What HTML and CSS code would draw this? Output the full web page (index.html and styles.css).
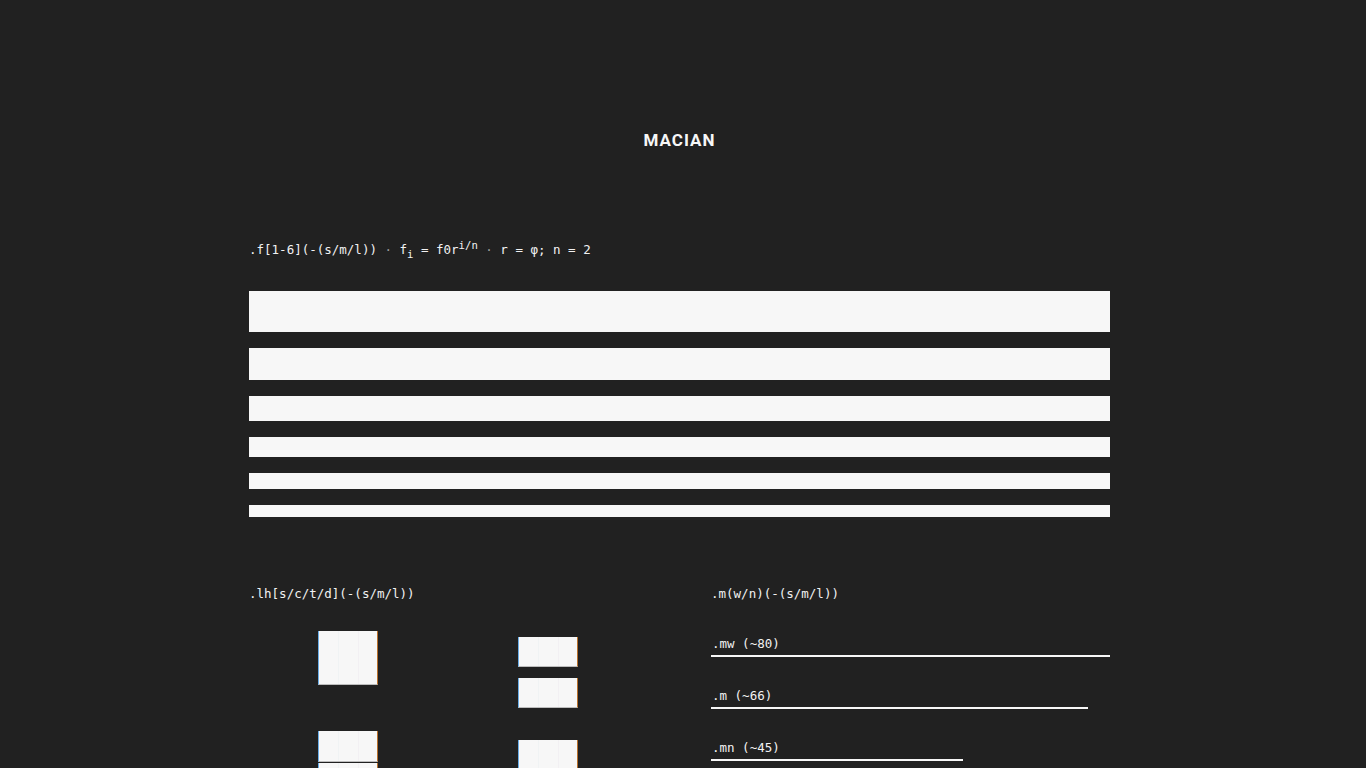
FILE: index.html
```html
<!DOCTYPE html>
<html lang="en">
<head>
<meta charset="utf-8">
<title>Macian</title>
<link rel="stylesheet" href="styles.css">
</head>
<body>
<main class="page">
  <header class="masthead">
    <h1 class="title">MACIAN</h1>
  </header>

  <section class="section">
    <p class="label">.f[1-6](-(s/m/l)) <span class="dim">·</span> f<sub>i</sub> = f0r<sup>i/n</sup> <span class="dim">·</span> r = φ; n = 2</p>
    <div class="bars">
      <div class="bar bar-1"></div>
      <div class="bar bar-2"></div>
      <div class="bar bar-3"></div>
      <div class="bar bar-4"></div>
      <div class="bar bar-5"></div>
      <div class="bar bar-6"></div>
    </div>
  </section>

  <section class="section split">
    <div class="col">
      <p class="label">.lh[s/c/t/d](-(s/m/l))</p>
      <div class="lh-grid">
        <div class="lh-col lh-col-a">
          <div class="lh-group lh-solid">
            <div class="blk blk-tall"></div>
          </div>
          <div class="lh-group lh-copy">
            <div class="blk blk-31"></div>
            <div class="blk blk-31"></div>
            <div class="blk blk-31"></div>
          </div>
        </div>
        <div class="lh-col lh-col-b">
          <div class="lh-group lh-title">
            <div class="blk blk-30"></div>
            <div class="blk blk-30"></div>
          </div>
          <div class="lh-group lh-double">
            <div class="blk blk-30"></div>
            <div class="blk blk-30"></div>
          </div>
        </div>
      </div>
    </div>
    <div class="col">
      <p class="label">.m(w/n)(-(s/m/l))</p>
      <ul class="measures">
        <li class="measure"><span class="m-name">.mw (~80)</span><span class="rule" style="width:399px"></span></li>
        <li class="measure"><span class="m-name">.m (~66)</span><span class="rule" style="width:377px"></span></li>
        <li class="measure"><span class="m-name">.mn (~45)</span><span class="rule" style="width:252px"></span></li>
      </ul>
    </div>
  </section>
</main>
</body>
</html>
```

FILE: styles.css
```css
html {
  background: #212121;
}
::-webkit-scrollbar {
  width: 8px;
  background: #1f1f1f;
}
::-webkit-scrollbar-thumb {
  background: #474747;
}
body {
  margin: 0;
  padding-right: 7px;
  background: #212121;
  color: #f7f7f7;
  font-family: "Roboto", "Liberation Sans", sans-serif;
}
.page {
  width: 861px;
  margin: 0 auto;
  padding: 128px 0 0;
  min-height: 5330px;
}
.masthead {
  display: flex;
  justify-content: center;
}
.title {
  margin: 0;
  font-size: 17px;
  line-height: 24px;
  font-weight: 700;
  letter-spacing: 1px;
  color: #f7f7f7;
}
.section {
  margin-top: 89px;
}
.section + .section {
  margin-top: 68px;
}
.label {
  margin: 0;
  font-family: "DejaVu Sans Mono", "Liberation Mono", monospace;
  font-size: 12.5px;
  line-height: 18px;
  color: #f2f2f2;
  white-space: pre;
}
.label sub, .label sup {
  font-size: 0.85em;
  line-height: 0;
}
.label .dim {
  color: #9a9a9a;
}
.bars {
  margin-top: 32px;
  display: flex;
  flex-direction: column;
  gap: 16px;
}
.bar {
  background: #f7f7f7;
}
.bar-1 { height: 41px; }
.bar-2 { height: 32px; }
.bar-3 { height: 25px; }
.bar-4 { height: 20px; }
.bar-5 { height: 16px; }
.bar-6 { height: 12px; }

.split {
  display: grid;
  grid-template-columns: 399px 399px;
  column-gap: 63px;
}
.lh-grid {
  display: grid;
  grid-template-columns: 1fr 1fr;
}
.lh-col {
  display: flex;
  flex-direction: column;
  align-items: center;
}
.lh-group {
  display: flex;
  flex-direction: column;
  align-items: center;
}
.lh-col-a { padding-top: 28px; padding-right: 1px; }
.lh-col-b { padding-top: 34px; padding-right: 1px; }
.lh-solid { margin-bottom: 46px; }
.lh-copy { gap: 1px; }
.lh-title { gap: 11px; margin-bottom: 32px; }
.lh-double { gap: 11px; }
.blk {
  width: 60px;
  background:
    linear-gradient(to right, transparent 19px, #f0f3f4 19px, #f0f3f4 20px, transparent 20px, transparent 39px, #f2f0f3 39px, #f2f0f3 40px, transparent 40px),
    #f7f7f7;
  border-left: 1px solid #6aaee8;
  border-right: 1px solid #b8702a;
  border-bottom: 1px solid #bdbdbd;
  box-sizing: border-box;
}
.blk-tall { height: 54px; }
.blk-31 { height: 31px; }
.blk-30 { height: 30px; }

.measures {
  list-style: none;
  margin: 32px 0 0;
  padding: 0;
  display: flex;
  flex-direction: column;
  gap: 30px;
}
.measure {
  display: flex;
  flex-direction: column;
  gap: 2px;
}
.m-name {
  font-family: "DejaVu Sans Mono", "Liberation Mono", monospace;
  font-size: 12.5px;
  line-height: 18px;
  color: #f2f2f2;
  padding-left: 1px;
}
.rule {
  display: block;
  height: 2px;
  background: #f7f7f7;
}
```
